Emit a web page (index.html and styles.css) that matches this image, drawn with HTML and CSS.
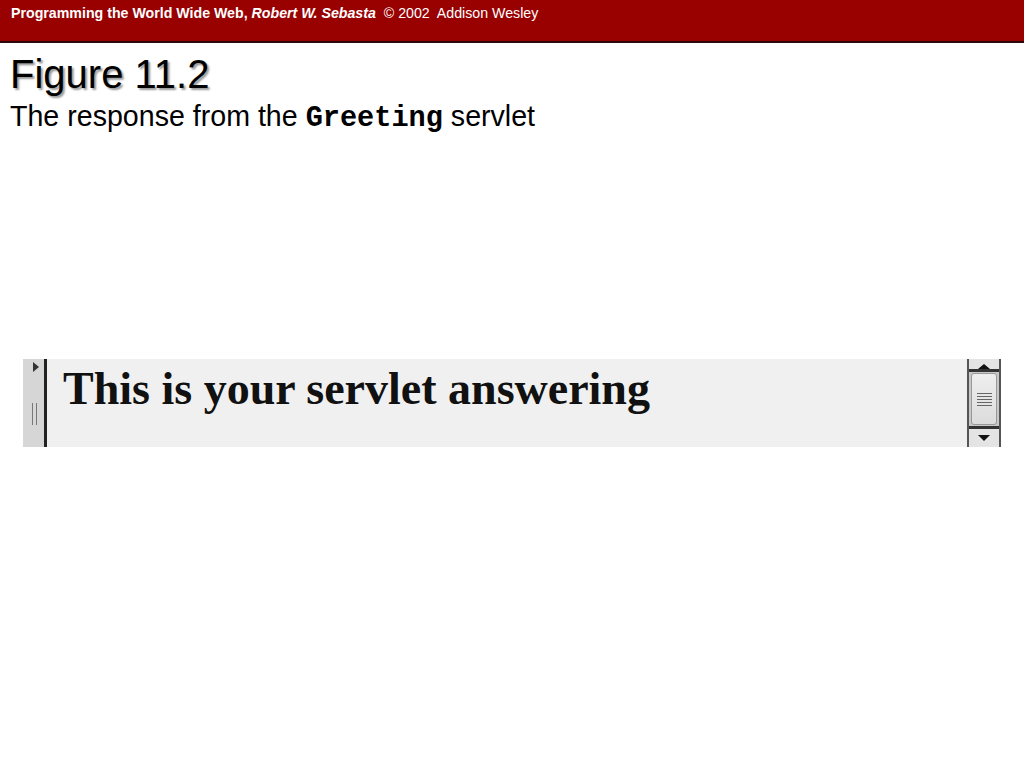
FILE: index.html
```html
<!DOCTYPE html>
<html lang="en">
<head>
<meta charset="UTF-8" />
<title>Figure 11.2</title>
<link rel="stylesheet" href="styles.css">
</head>
<body>
  <header class="banner">
    <p><b>Programming the World Wide Web, <i>Robert W. Sebasta</i></b>&nbsp; &copy; 2002&nbsp; Addison Wesley</p>
  </header>

  <main class="slide">
    <h1 class="title">Figure 11.2</h1>
    <p class="subtitle">The response from the <code>Greeting</code> servlet</p>

    <div class="shot">
      <div class="side-strip">
        <svg width="10" height="14" viewBox="0 0 10 14" class="arrow"><path d="M2 1 L8 6 L2 11 Z" fill="#333"/></svg>
        <span class="grip"></span>
      </div>
      <div class="page">This is your servlet answering</div>
      <div class="scrollbar">
        <div class="btn up"><svg width="18" height="6" viewBox="0 0 18 6"><path d="M3 6 L9 1 L15 6 Z" fill="#111"/></svg></div>
        <div class="thumb"><span></span><span></span><span></span><span></span><span></span></div>
        <div class="btn down"><svg width="18" height="8" viewBox="0 0 18 8"><path d="M3 1 L9 7 L15 1 Z" fill="#111"/></svg></div>
      </div>
    </div>
  </main>
</body>
</html>
```

FILE: styles.css
```css
body {
  margin: 0;
  background: #fff;
  font-family: 'Liberation Sans', Arial, sans-serif;
  color: #000;
}

.banner {
  background: #990000;
  height: 41px;
  border-bottom: 2px solid #2a0a0a;
}

.banner p {
  margin: 0;
  padding: 5px 0 0 11px;
  color: #fff;
  font-size: 14.2px;
}

.slide {
  padding: 10px 0 0 10px;
}

.title {
  margin: 0;
  font-size: 40px;
  font-weight: normal;
  line-height: 43px;
  text-shadow: 2px 2px 2px #999;
}

.subtitle {
  margin: 3px 0 0;
  font-size: 28.6px;
  line-height: 34px;
}

.subtitle code {
  font-family: 'Liberation Mono', 'Courier New', monospace;
  font-weight: bold;
  font-size: 28.6px;
}

.shot {
  margin: 223px 0 0 13px;
  width: 978px;
  height: 88px;
  display: flex;
  background: #f0f0f0;
}

.side-strip {
  width: 21px;
  background: #d6d6d6;
  border-right: 3px solid #222;
  display: flex;
  flex-direction: column;
  align-items: flex-end;
}

.side-strip .arrow {
  margin: 2px 3px 0 0;
}

.side-strip .grip {
  margin: 28px 7px 0 0;
  width: 3px;
  height: 22px;
  border-left: 1px solid #777;
  border-right: 1px solid #777;
}

.page {
  flex: 1;
  padding: 5px 0 0 16px;
  font-family: 'Liberation Serif', 'Times New Roman', serif;
  font-weight: bold;
  font-size: 46px;
  line-height: 50px;
  color: #111;
}

.scrollbar {
  width: 30px;
  border-left: 2px solid #555;
  border-right: 2px solid #555;
  background: #c8c8c8;
  display: flex;
  flex-direction: column;
}

.scrollbar .btn {
  background: #e4e4e4;
  display: flex;
  justify-content: center;
}

.scrollbar .up {
  height: 10px;
  align-items: flex-end;
  border-bottom: 3px solid #333;
}

.scrollbar .down {
  height: 18px;
  align-items: center;
  border-top: 3px solid #333;
  margin-top: auto;
}

.scrollbar .thumb {
  flex: 1;
  margin: 1px 2px;
  background: linear-gradient(#eeeeee, #dcdcdc);
  border: 1px solid #999;
  border-radius: 3px;
  display: flex;
  flex-direction: column;
  justify-content: center;
  align-items: center;
  gap: 2px;
}

.scrollbar .thumb span {
  width: 15px;
  height: 1px;
  background: #666;
}
```
